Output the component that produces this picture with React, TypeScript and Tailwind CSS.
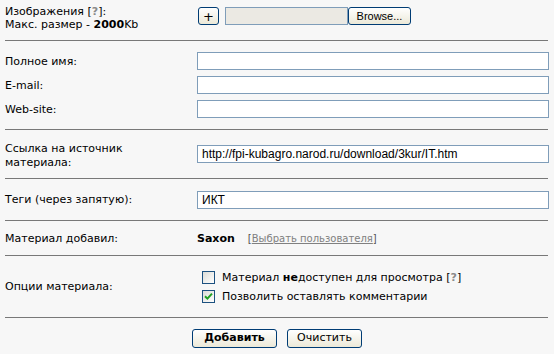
const font = { fontFamily: '"DejaVu Sans", Verdana, sans-serif' };

const Hr = () => <div className="h-px w-[543px] bg-[#787878]" />;

const TextInput = ({ value = "" }: { value?: string }) => (
  <input
    type="text"
    defaultValue={value}
    className="block h-[18px] w-[352px] border border-[#7f9db9] bg-white px-[4px] text-[12px] text-black outline-none"
    style={{ fontFamily: '"Liberation Sans", Arial, sans-serif' }}
  />
);

const XpButton = ({ children, className = "" }: { children: React.ReactNode; className?: string }) => (
  <button
    type="button"
    className={
      "flex items-center justify-center rounded-[3px] border border-[#003c74] bg-gradient-to-b from-white to-[#ece9d8] text-black " +
      className
    }
  >
    {children}
  </button>
);

const Checkbox = ({ checked }: { checked?: boolean }) => (
  <span className="flex h-[13px] w-[13px] shrink-0 items-center justify-center border border-[#1c5180] bg-gradient-to-br from-[#dcdcd7] to-white">
    {checked && (
      <svg width="9" height="9" viewBox="0 0 9 9">
        <path d="M1 4.2 L3.4 6.6 L8 1.6" stroke="#21a121" strokeWidth="2" fill="none" />
      </svg>
    )}
  </span>
);

const Help = () => (
  <span>
    [<b className="text-[#8a8a8a]">?</b>]
  </span>
);

export default function App() {
  return (
    <div className="min-h-screen bg-[#f7f7f7]">
      <div className="w-[549px] pl-[5px] text-[11px] leading-[13px] text-black" style={font}>
        {/* images */}
        <div className="flex h-[40px]">
          <div className="w-[192px] pt-[5px]">
            <div>
              Изображения <Help />:
            </div>
            <div>
              Макс. размер - <b>2000</b>Kb
            </div>
          </div>
          <div className="flex pt-[7px]">
            <XpButton className="ml-px h-[18px] w-[21px] text-[13px]">+</XpButton>
            <div className="ml-[6px] h-[18px] w-[123px] border border-[#7f9db9] bg-[#ebe9e3]" />
            <XpButton className="h-[18px] w-[63px] text-[11px]">
              <span style={{ fontFamily: '"Liberation Sans", Arial, sans-serif' }}>Browse...</span>
            </XpButton>
          </div>
        </div>
        <Hr />

        {/* personal */}
        <div className="flex h-[88px] flex-col gap-[6px] pt-[11px]">
          {["Полное имя:", "E-mail:", "Web-site:"].map((l) => (
            <div key={l} className="flex h-[18px] items-center">
              <div className="w-[192px]">{l}</div>
              <TextInput />
            </div>
          ))}
        </div>
        <Hr />

        {/* source */}
        <div className="flex h-[48px] items-center">
          <div className="w-[192px] pt-[4px] leading-[14px]">
            Ссылка на источник
            <br />
            материала:
          </div>
          <TextInput value="http://fpi-kubagro.narod.ru/download/3kur/IT.htm" />
        </div>
        <Hr />

        {/* tags */}
        <div className="flex h-[41px] items-center">
          <div className="w-[192px]">Теги (через запятую):</div>
          <TextInput value="ИКТ" />
        </div>
        <Hr />

        {/* author */}
        <div className="flex h-[34px] items-center">
          <div className="w-[192px]">Материал добавил:</div>
          <b>Saxon</b>
          <span className="ml-[13px] text-[10px] text-[#555]">
            [<span className="cursor-pointer text-[#808080] underline">Выбрать пользователя</span>]
          </span>
        </div>
        <Hr />

        {/* options */}
        <div className="flex h-[61px] items-center">
          <div className="w-[192px]">Опции материала:</div>
          <div className="flex flex-col gap-[6px] pl-[5px] pt-px">
            <label className="flex items-center gap-[7px]">
              <Checkbox />
              <span>
                Материал <b>не</b>доступен для просмотра <Help />
              </span>
            </label>
            <label className="flex items-center gap-[7px]">
              <Checkbox checked />
              <span>Позволить оставлять комментарии</span>
            </label>
          </div>
        </div>
        <Hr />
      </div>

      {/* actions */}
      <div className="flex w-[554px] justify-center gap-[10px] pt-[11px] text-[11px]" style={font}>
        <XpButton className="h-[19px] w-[85px] font-bold">Добавить</XpButton>
        <XpButton className="h-[19px] w-[75px]">Очистить</XpButton>
      </div>
    </div>
  );
}
